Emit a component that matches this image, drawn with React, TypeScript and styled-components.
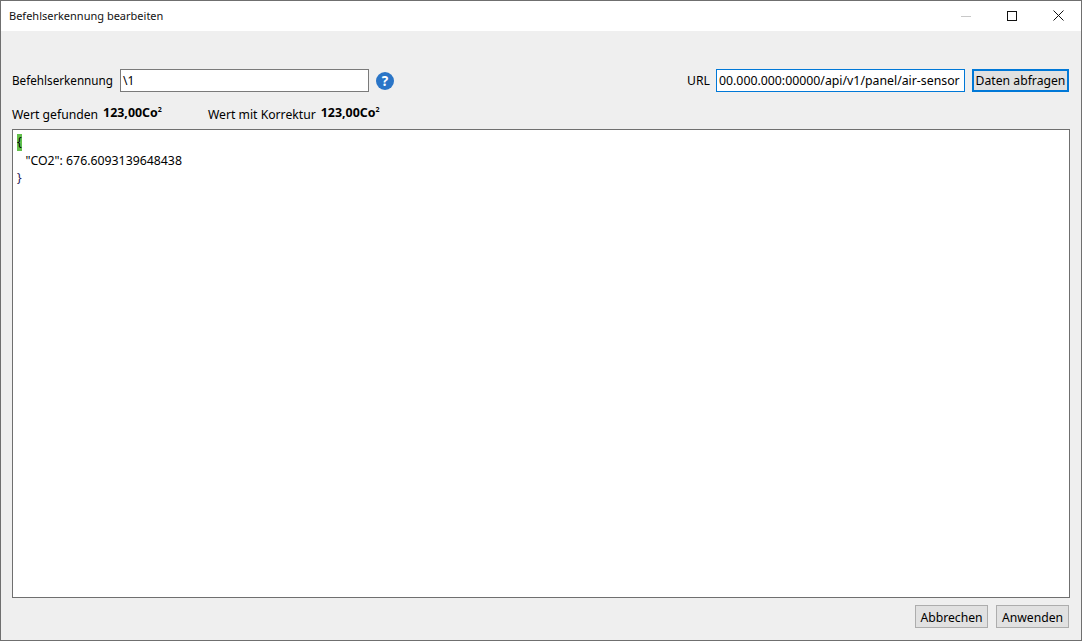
import React from "react";
import styled, { createGlobalStyle } from "styled-components";

const Global = createGlobalStyle`
  html, body { margin: 0; padding: 0; }
  body { font-family: "Noto Sans", "Open Sans", sans-serif; color: #000; }
  * { box-sizing: border-box; }
`;

const Win = styled.div`
  width: 1082px;
  height: 641px;
  border: 1px solid #6f6f6f;
  display: flex;
  flex-direction: column;
  background: #efefef;
  overflow: hidden;
`;

const TitleBar = styled.div`
  height: 30px;
  flex: none;
  background: #fff;
  display: flex;
  align-items: center;
  justify-content: space-between;
  padding-left: 8px;
`;

const Title = styled.span`
  font-size: 11px;
  line-height: 30px;
  height: 30px;
  color: #111;
`;

const Controls = styled.div`
  display: flex;
  height: 100%;
`;

const Ctrl = styled.div`
  width: 46px;
  height: 100%;
  display: flex;
  align-items: center;
  justify-content: center;
  padding-bottom: 1px;
  svg { display: block; }
`;

const Body = styled.div`
  flex: 1;
  display: flex;
  flex-direction: column;
  padding: 38px 11px 12px 11px;
  min-height: 0;
`;

const TopRow = styled.div`
  display: flex;
  align-items: center;
  height: 23px;
  margin-right: 1px;
`;

const Label = styled.span<{ $size?: number }>`
  font-size: ${(p) => p.$size ?? 12.2}px;
  line-height: 23px;
  white-space: nowrap;
`;

const UrlLabel = styled(Label)`
  line-height: 25px;
`;

const Field = styled.div<{ $focus?: boolean; $gap: number }>`
  width: 249px;
  height: 23px;
  background: #fff;
  border: 1px solid ${(p) => (p.$focus ? "#0078d7" : "#7a7a7a")};
  font-size: ${(p) => (p.$focus ? "12.3px" : "12px")};
  line-height: 21px;
  padding-left: 2px;
  margin-left: ${(p) => p.$gap}px;
  white-space: nowrap;
  overflow: hidden;
`;

const Help = styled.svg`
  margin-left: 7px;
  display: block;
`;

const Spacer = styled.div`
  flex: 1;
`;

const FocusButton = styled.div`
  width: 97px;
  height: 23px;
  margin-left: 7px;
  background: #e1e1e1;
  border: 2px solid #0078d7;
  font-size: 12.2px;
  line-height: 19px;
  text-align: center;
  white-space: nowrap;
`;

const InfoRow = styled.div`
  display: flex;
  align-items: center;
  height: 22px;
  margin-top: 11px;
  margin-bottom: 4px;
`;

const Metric = styled.div`
  display: flex;
  align-items: center;
  width: 196px;
  gap: 5px;
`;

const Value = styled.span`
  font-size: 12.4px;
  font-weight: 700;
  line-height: 18px;
  white-space: nowrap;
  position: relative;
  top: -1px;
`;

const Sup = styled.sup`
  font-size: 7px;
  line-height: 0;
  vertical-align: super;
`;

const Editor = styled.div`
  flex: 1;
  background: #fff;
  border: 1px solid #6f6f6f;
  padding: 3px 4px;
  font-size: 12.3px;
  line-height: 18px;
  min-height: 0;
`;

const Line = styled.div`
  height: 18px;
  white-space: pre;
`;

const Indented = styled(Line)`
  padding-left: 2px;
  padding-top: 1px;
`;

const Match = styled.span`
  background: #63bf4b;
  display: inline-block;
  line-height: 16px;
  height: 17px;
`;

const Brace = styled.span`
  color: #2a1a5a;
`;

const Footer = styled.div`
  display: flex;
  justify-content: flex-end;
  gap: 8px;
  margin-top: 7px;
  margin-right: 1px;
  height: 23px;
`;

const Btn = styled.div`
  width: 73px;
  height: 23px;
  background: #e1e1e1;
  border: 1px solid #adadad;
  font-size: 12.2px;
  line-height: 23px;
  text-align: center;
`;

export default function App() {
  return (
    <>
      <Global />
      <Win>
        <TitleBar>
          <Title>Befehlserkennung bearbeiten</Title>
          <Controls>
            <Ctrl>
              <svg width="10" height="10" viewBox="0 0 10 10">
                <path d="M0 5.5H10" stroke="#c8c8c8" strokeWidth="1" />
              </svg>
            </Ctrl>
            <Ctrl>
              <svg width="10" height="10" viewBox="0 0 10 10">
                <rect x="0.5" y="0.5" width="9" height="9" fill="none" stroke="#111" strokeWidth="1" />
              </svg>
            </Ctrl>
            <Ctrl>
              <svg width="11" height="11" viewBox="0 0 11 11">
                <path d="M0.5 0.5L10.5 10.5M10.5 0.5L0.5 10.5" stroke="#111" strokeWidth="1" />
              </svg>
            </Ctrl>
          </Controls>
        </TitleBar>
        <Body>
          <TopRow>
            <Label $size={11.7}>Befehlserkennung</Label>
            <Field $gap={7}>\1</Field>
            <Help width="18" height="18" viewBox="0 0 18 18">
              <circle cx="9" cy="9" r="9" fill="#2a75c7" />
              <text x="9" y="14" textAnchor="middle" fontFamily="'Noto Sans', sans-serif" fontWeight="700" fontSize="13.5" fill="#fff">?</text>
            </Help>
            <Spacer />
            <UrlLabel>URL</UrlLabel>
            <Field $gap={6} $focus>00.000.000:00000/api/v1/panel/air-sensor</Field>
            <FocusButton>Daten abfragen</FocusButton>
          </TopRow>
          <InfoRow>
            <Metric>
              <Label>Wert gefunden</Label>
              <Value>123,00Co<Sup>2</Sup></Value>
            </Metric>
            <Metric>
              <Label>Wert mit Korrektur</Label>
              <Value>123,00Co<Sup>2</Sup></Value>
            </Metric>
          </InfoRow>
          <Editor>
            <Line><Match>{"{"}</Match></Line>
            <Indented>{'  "CO2": 676.6093139648438'}</Indented>
            <Line><Brace>{"}"}</Brace></Line>
          </Editor>
          <Footer>
            <Btn>Abbrechen</Btn>
            <Btn>Anwenden</Btn>
          </Footer>
        </Body>
      </Win>
    </>
  );
}
